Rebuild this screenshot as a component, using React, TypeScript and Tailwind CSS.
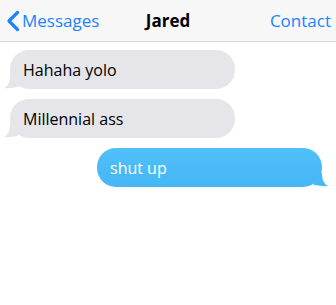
import React from "react";

type Msg = { text: string; mine?: boolean };

const messages: Msg[] = [
  { text: "Hahaha yolo" },
  { text: "Millennial ass" },
  { text: "shut up", mine: true },
];

function Tail({ mine }: { mine?: boolean }) {
  // little curled tail under the bubble corner
  const fill = mine ? "#48b8f6" : "#e5e5ea";
  return (
    <svg
      width="14"
      height="14"
      viewBox="0 0 14 14"
      className={mine ? "absolute -right-[6px] bottom-0" : "absolute -left-[6px] bottom-0"}
      style={mine ? { transform: "scaleX(-1)" } : undefined}
    >
      <path d="M14 0 L14 12 C10 12 4 14 0 13 C4 11 6 7 6 0 Z" fill={fill} />
    </svg>
  );
}

function Bubble({ text, mine }: Msg) {
  return (
    <div
      className={
        mine
          ? "relative ml-auto mr-[4px] flex h-[39px] w-[225px] items-center rounded-[19px] bg-gradient-to-b from-[#50c0f9] to-[#46b6f5] pl-[13px] text-[16px] text-white"
          : "relative flex h-[39px] w-[225px] items-center rounded-[19px] bg-[#e5e5ea] pl-[13px] text-[16px] text-black"
      }
    >
      <Tail mine={mine} />
      <span className="relative">{text}</span>
    </div>
  );
}

export default function App() {
  return (
    <div className="h-[305px] w-[336px] bg-white font-['Open_Sans',sans-serif]">
      <div className="flex h-[42px] items-center justify-between border-b border-[#d8d8d8] bg-[#f7f7f7] pl-[5px] pr-[5px]">
        <div className="flex w-[110px] items-center text-[17px] text-[#1a84fb]">
          <svg width="16" height="22" viewBox="0 0 16 22" className="mr-[1px]">
            <path d="M12.5 2.5 L4 11 L12.5 19.5" fill="none" stroke="#1a84fb" strokeWidth="3.2" strokeLinecap="round" strokeLinejoin="round" />
          </svg>
          <span>Messages</span>
        </div>
        <div className="text-[17px] font-bold text-black">Jared</div>
        <div className="flex w-[110px] justify-end text-[17px] text-[#1a84fb]">Contact</div>
      </div>
      <div className="flex flex-col gap-[10px] px-[10px] pt-[8px]">
        {messages.map((m) => (
          <Bubble key={m.text} {...m} />
        ))}
      </div>
    </div>
  );
}
